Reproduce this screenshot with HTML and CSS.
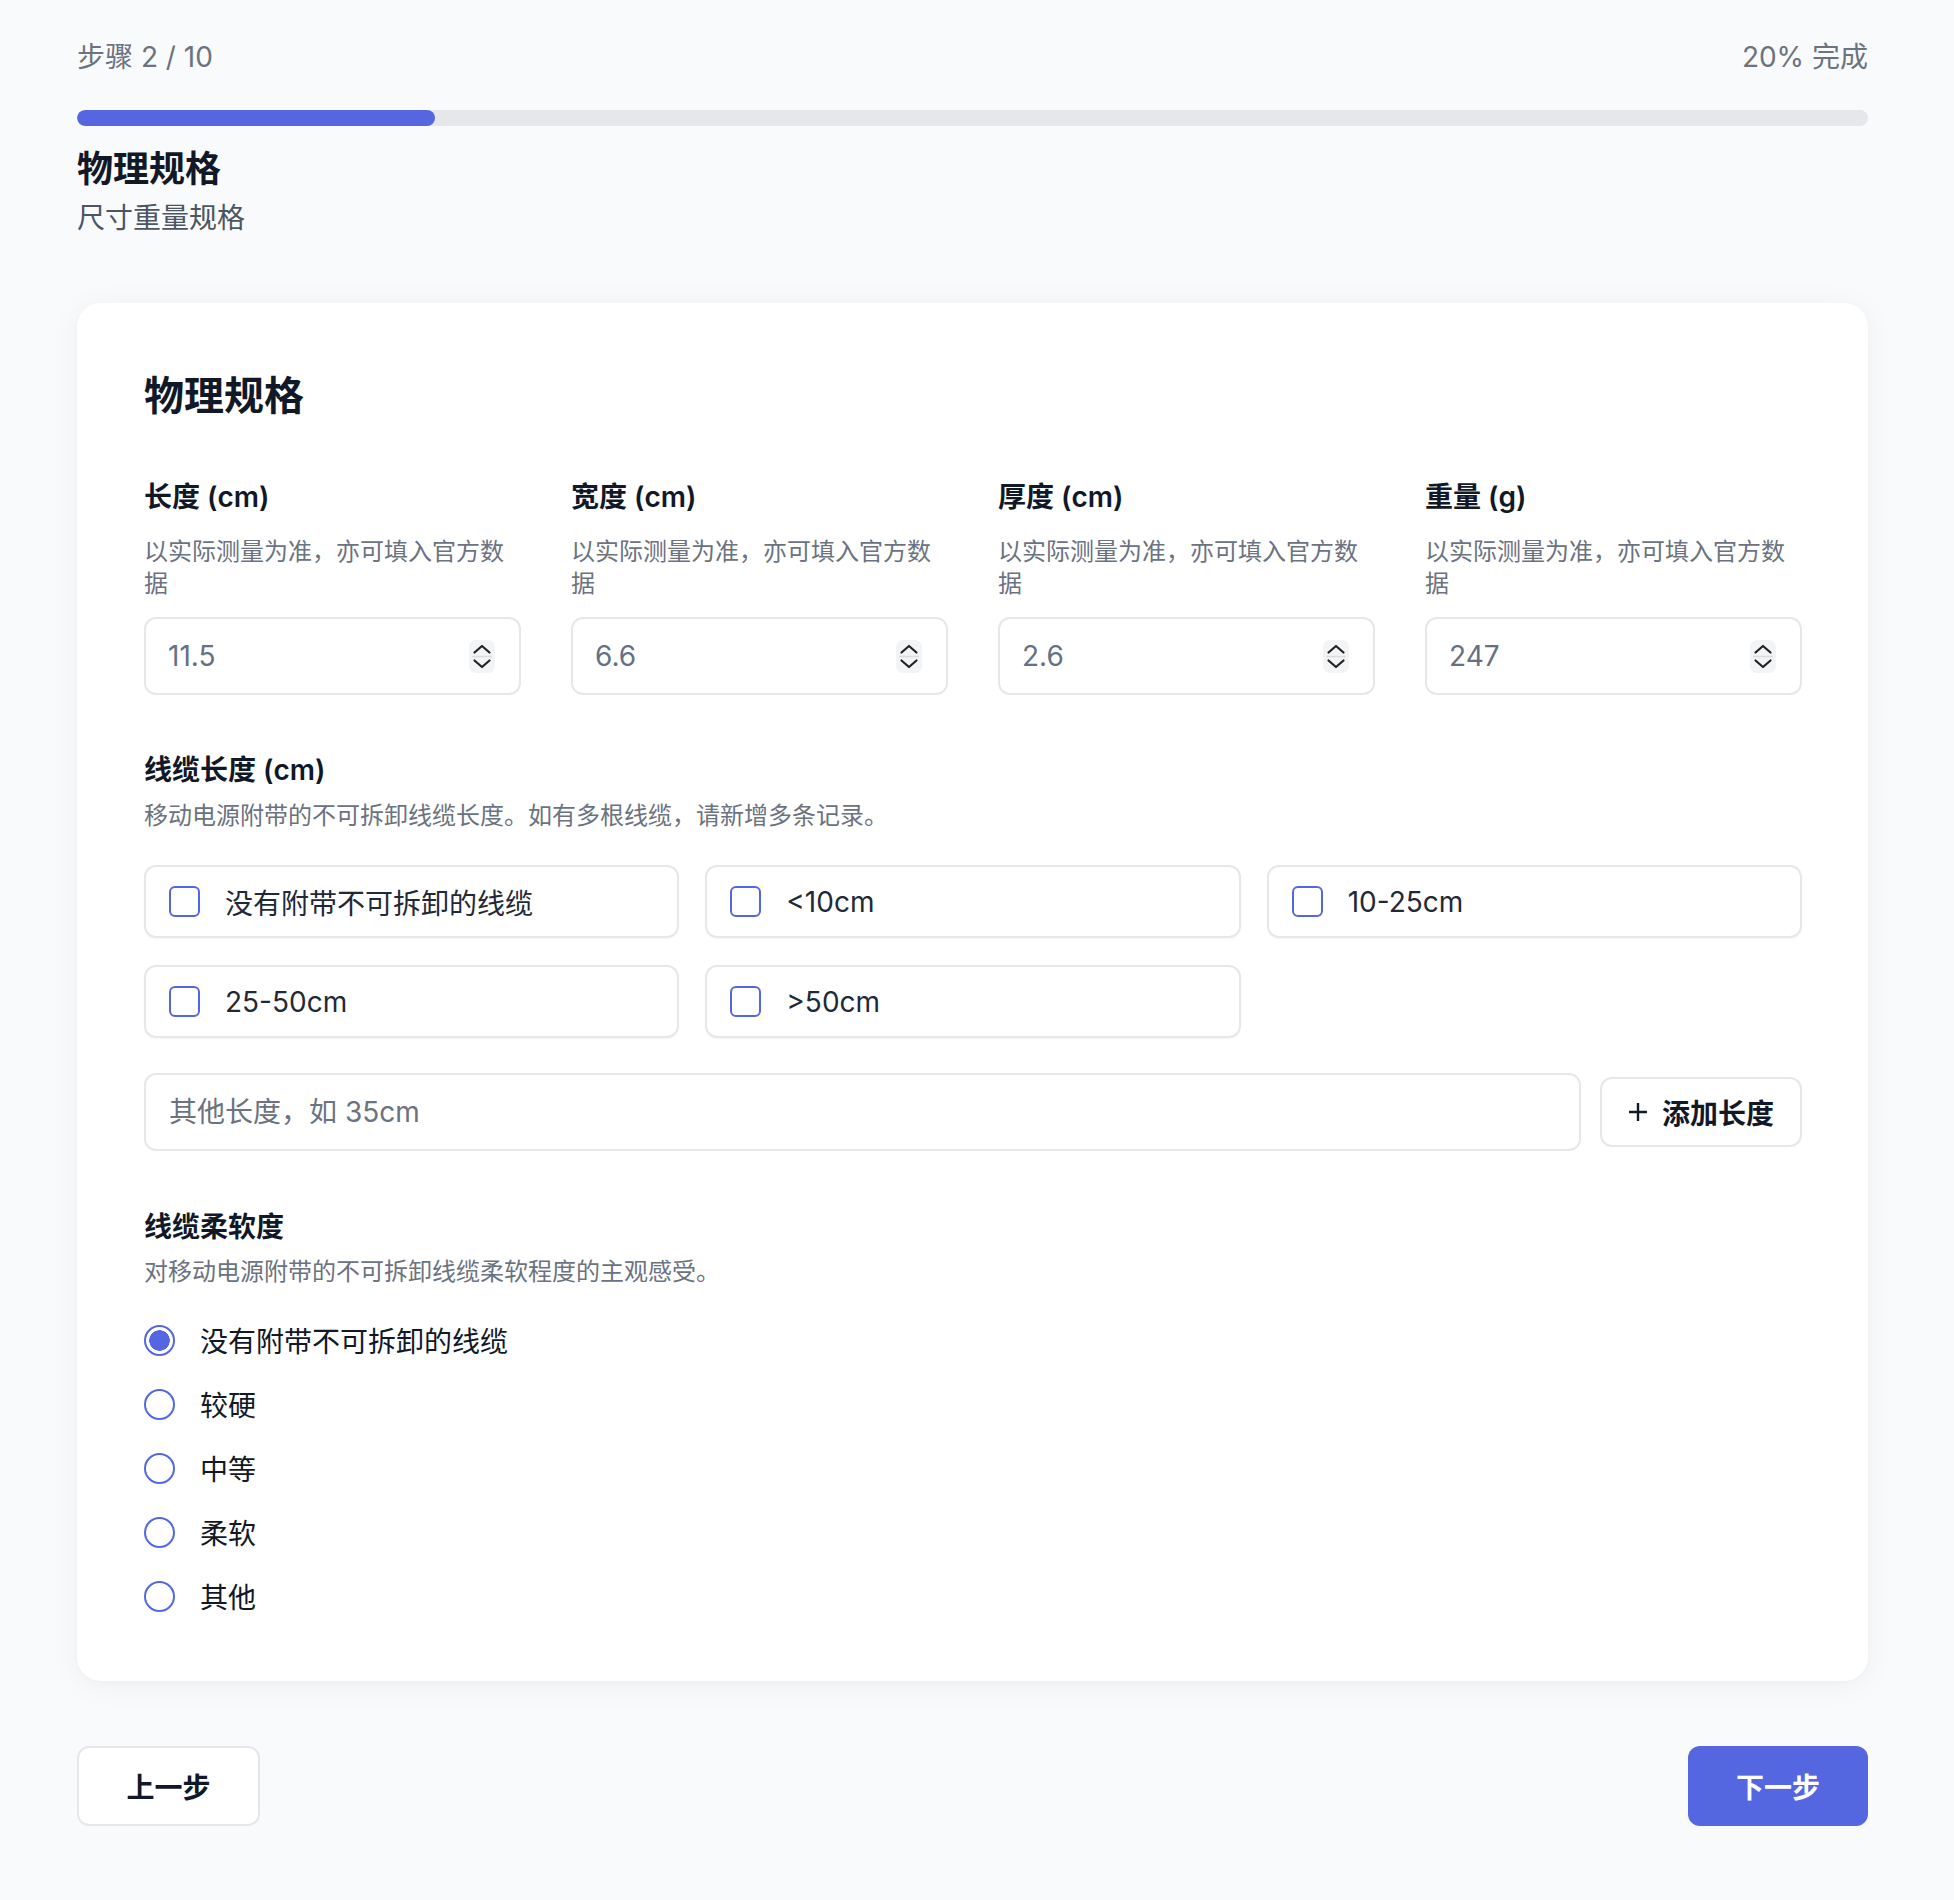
FILE: index.html
```html
<!DOCTYPE html>
<html lang="zh-CN">
<head>
    <meta charset="UTF-8">
    <meta name="viewport" content="width=device-width, initial-scale=1.0">
    <title>物理规格 - 步骤 2 / 10</title>
    <link rel="stylesheet" href="styles.css">
</head>
<body>
    <div class="wizard">
        <div class="step-meta">
            <span>步骤 2 / 10</span>
            <span>20% 完成</span>
        </div>
        <div class="progress">
            <div class="progress-fill" style="width: 20%;"></div>
        </div>

        <div class="page-head">
            <h1>物理规格</h1>
            <p>尺寸重量规格</p>
        </div>

        <div class="card">
            <h2>物理规格</h2>

            <div class="dims">
                <div class="field">
                    <label class="field-label">长度 (cm)</label>
                    <div class="field-help">以实际测量为准，亦可填入官方数据</div>
                    <div class="num-input">
                        <input type="text" value="11.5">
                        <span class="spinner">
                            <svg width="26" height="33" viewBox="0 0 26 33"><path d="M5.5 12.5 L13 6 L20.5 12.5" /><line class="sep" x1="3" y1="16.5" x2="23" y2="16.5" /><path d="M5.5 20.5 L13 27 L20.5 20.5" /></svg>
                        </span>
                    </div>
                </div>
                <div class="field">
                    <label class="field-label">宽度 (cm)</label>
                    <div class="field-help">以实际测量为准，亦可填入官方数据</div>
                    <div class="num-input">
                        <input type="text" value="6.6">
                        <span class="spinner">
                            <svg width="26" height="33" viewBox="0 0 26 33"><path d="M5.5 12.5 L13 6 L20.5 12.5" /><line class="sep" x1="3" y1="16.5" x2="23" y2="16.5" /><path d="M5.5 20.5 L13 27 L20.5 20.5" /></svg>
                        </span>
                    </div>
                </div>
                <div class="field">
                    <label class="field-label">厚度 (cm)</label>
                    <div class="field-help">以实际测量为准，亦可填入官方数据</div>
                    <div class="num-input">
                        <input type="text" value="2.6">
                        <span class="spinner">
                            <svg width="26" height="33" viewBox="0 0 26 33"><path d="M5.5 12.5 L13 6 L20.5 12.5" /><line class="sep" x1="3" y1="16.5" x2="23" y2="16.5" /><path d="M5.5 20.5 L13 27 L20.5 20.5" /></svg>
                        </span>
                    </div>
                </div>
                <div class="field">
                    <label class="field-label">重量 (g)</label>
                    <div class="field-help">以实际测量为准，亦可填入官方数据</div>
                    <div class="num-input">
                        <input type="text" value="247">
                        <span class="spinner">
                            <svg width="26" height="33" viewBox="0 0 26 33"><path d="M5.5 12.5 L13 6 L20.5 12.5" /><line class="sep" x1="3" y1="16.5" x2="23" y2="16.5" /><path d="M5.5 20.5 L13 27 L20.5 20.5" /></svg>
                        </span>
                    </div>
                </div>
            </div>

            <div class="section cable-length">
                <div class="field-label">线缆长度 (cm)</div>
                <div class="section-help">移动电源附带的不可拆卸线缆长度。如有多根线缆，请新增多条记录。</div>
                <div class="options">
                    <label class="option"><input type="checkbox"><span>没有附带不可拆卸的线缆</span></label>
                    <label class="option"><input type="checkbox"><span>&lt;10cm</span></label>
                    <label class="option"><input type="checkbox"><span>10-25cm</span></label>
                    <label class="option"><input type="checkbox"><span>25-50cm</span></label>
                    <label class="option"><input type="checkbox"><span>&gt;50cm</span></label>
                </div>
                <div class="other-row">
                    <input class="text-input" type="text" placeholder="其他长度，如 35cm">
                    <button class="add-button">
                        <svg width="20" height="20" viewBox="0 0 20 20"><path d="M10 1 V19 M1 10 H19" /></svg>
                        添加长度
                    </button>
                </div>
            </div>

            <div class="section softness">
                <div class="field-label">线缆柔软度</div>
                <div class="section-help">对移动电源附带的不可拆卸线缆柔软程度的主观感受。</div>
                <div class="radios">
                    <label class="radio"><input type="radio" name="softness" checked><span>没有附带不可拆卸的线缆</span></label>
                    <label class="radio"><input type="radio" name="softness"><span>较硬</span></label>
                    <label class="radio"><input type="radio" name="softness"><span>中等</span></label>
                    <label class="radio"><input type="radio" name="softness"><span>柔软</span></label>
                    <label class="radio"><input type="radio" name="softness"><span>其他</span></label>
                </div>
            </div>
        </div>

        <div class="wizard-nav">
            <button class="prev-button">上一步</button>
            <button class="next-button">下一步</button>
        </div>
    </div>
</body>
</html>
```

FILE: styles.css
```css
body {
    margin: 0;
    background: #f9fafb;
    font-family: Inter, "Noto Sans CJK SC", sans-serif;
    color: #111827;
}

.wizard {
    width: 1791px;
    margin-left: 77px;
    padding: 37px 0 74px;
}

/* top step counter + progress */
.step-meta {
    display: flex;
    justify-content: space-between;
    font-size: 28px;
    line-height: 40px;
    color: #6b7280;
}

.progress {
    margin-top: 33px;
    height: 16px;
    background: #e5e7eb;
    border-radius: 8px;
    overflow: hidden;
}

.progress-fill {
    height: 100%;
    background: #5466e0;
    border-radius: 8px;
}

.page-head {
    margin-top: 19px;
}

.page-head h1 {
    margin: 0;
    font-size: 36px;
    line-height: 48px;
    font-weight: 700;
    color: #111827;
}

.page-head p {
    margin: 5px 0 0;
    font-size: 28px;
    line-height: 40px;
    color: #4b5563;
}

/* main card */
.card {
    margin-top: 65px;
    background: white;
    border-radius: 24px;
    padding: 67px 66px 65px 67px;
    box-shadow: 0 4px 30px rgba(0, 0, 0, 0.05), 0 1px 4px rgba(0, 0, 0, 0.02);
}

.card h2 {
    margin: 0;
    font-size: 40px;
    line-height: 52px;
    font-weight: 700;
    color: #111827;
}

.dims {
    margin-top: 55px;
    display: grid;
    grid-template-columns: repeat(4, minmax(0, 1fr));
    gap: 50px;
}

.field {
    min-width: 0;
}

.field-label {
    display: block;
    font-size: 28px;
    line-height: 40px;
    font-weight: 600;
    color: #111827;
}

.field-help {
    margin-top: 19px;
    font-size: 24px;
    line-height: 32px;
    color: #6b7280;
}

.num-input {
    margin-top: 17px;
    height: 78px;
    box-sizing: border-box;
    border: 2px solid #e5e7eb;
    border-radius: 12px;
    display: flex;
    align-items: center;
    padding: 0 24px 0 22px;
    background: white;
}

.num-input input {
    flex: 1;
    width: 0;
    min-width: 0;
    border: none;
    outline: none;
    padding: 0;
    font-family: inherit;
    font-size: 28px;
    color: #667085;
    background: transparent;
}

.spinner {
    display: flex;
    flex: none;
    width: 26px;
    height: 33px;
    background: #f3f4f6;
    border-radius: 7px;
}

.spinner path {
    fill: none;
    stroke: #222;
    stroke-width: 2.2;
    stroke-linecap: round;
    stroke-linejoin: round;
}

.spinner .sep {
    stroke: #dcdcdc;
    stroke-width: 1.5;
}

/* cable sections */
.section {
    margin-top: 55px;
}

.softness {
    margin-top: 56px;
}

.section-help {
    margin-top: 10px;
    font-size: 24px;
    line-height: 32px;
    color: #6b7280;
}

.softness .section-help {
    margin-top: 9px;
}

.options {
    margin-top: 33px;
    display: grid;
    grid-template-columns: repeat(3, minmax(0, 1fr));
    column-gap: 26px;
    row-gap: 27px;
}

.option {
    height: 73px;
    box-sizing: border-box;
    border: 2px solid #e5e7eb;
    border-radius: 12px;
    box-shadow: 0 1px 2px rgba(0, 0, 0, 0.04);
    display: flex;
    align-items: center;
    gap: 25px;
    padding: 0 23px;
    font-size: 28px;
    color: #1f2937;
    cursor: pointer;
}

.option input {
    appearance: none;
    flex: none;
    margin: 0;
    width: 31px;
    height: 31px;
    border: 2px solid #5466e0;
    border-radius: 6px;
    background: white;
}

.other-row {
    margin-top: 35px;
    display: flex;
    align-items: center;
    gap: 19px;
}

.text-input {
    flex: 1;
    min-width: 0;
    height: 78px;
    box-sizing: border-box;
    border: 2px solid #e5e7eb;
    border-radius: 12px;
    padding: 0 23px;
    font-family: inherit;
    font-size: 28px;
    color: #1f2937;
    outline: none;
}

.text-input::placeholder {
    color: #6b7280;
}

.add-button {
    flex: none;
    width: 202px;
    height: 70px;
    box-sizing: border-box;
    border: 2px solid #e5e7eb;
    border-radius: 12px;
    background: white;
    display: flex;
    align-items: center;
    justify-content: center;
    gap: 14px;
    font-family: inherit;
    font-size: 28px;
    font-weight: 600;
    color: #111827;
    cursor: pointer;
}

.add-button path {
    stroke: #111827;
    stroke-width: 2.4;
}

.radios {
    margin-top: 32px;
    display: flex;
    flex-direction: column;
    gap: 24px;
}

.radio {
    display: flex;
    align-items: center;
    gap: 25px;
    height: 40px;
    font-size: 28px;
    color: #111827;
    cursor: pointer;
}

.radio input {
    appearance: none;
    flex: none;
    margin: 0;
    width: 31px;
    height: 31px;
    border: 2px solid #5466e0;
    border-radius: 50%;
    background: white;
}

.radio input:checked {
    background: radial-gradient(circle, #5466e0 0 10px, white 10.5px);
}

/* bottom navigation */
.wizard-nav {
    margin-top: 65px;
    display: flex;
    justify-content: space-between;
}

.prev-button, .next-button {
    height: 80px;
    border-radius: 12px;
    font-family: inherit;
    font-size: 28px;
    font-weight: 600;
    cursor: pointer;
}

.prev-button {
    width: 183px;
    background: white;
    border: 2px solid #e5e7eb;
    color: #111827;
}

.next-button {
    width: 180px;
    background: #5466e0;
    border: none;
    color: white;
}
```
